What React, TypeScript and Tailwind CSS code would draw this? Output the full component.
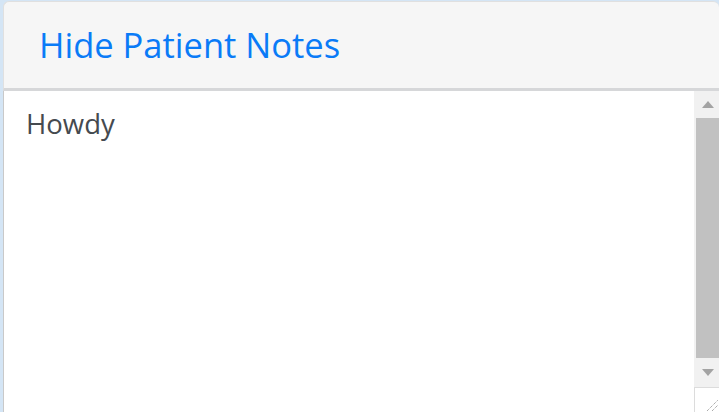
export default function App() {
  return (
    <div
      className="h-[412px] w-full overflow-hidden bg-[#d4e5f5] pl-[3px] pt-[1px] flex flex-col"
      style={{ fontFamily: '"Open Sans", "Noto Sans", sans-serif' }}
    >
      {/* Header */}
      <div className="h-[90px] shrink-0 rounded-t-[6px] border-t border-l border-[#e0e0e0] border-b-[3px] border-b-[#d6d7d9] bg-[#f6f6f6] pl-[35px] flex items-center">
        <button className="text-[34.5px] leading-none text-[#0a7bf7] pt-[1px]">Hide Patient Notes</button>
      </div>

      {/* Notes field */}
      <div className="flex-1 flex bg-white border-l border-[#c9c9c9]">
        <textarea
          readOnly
          defaultValue="Howdy"
          className="flex-1 resize-none outline-none bg-white pl-[22px] pt-[13px] text-[27.5px] leading-[40px] text-[#454a4f]"
        />
        {/* Scrollbar */}
        <div className="w-[25px] flex flex-col">
          <div className="flex-1 flex flex-col bg-[#f1f1f1]">
            <div className="h-[27px] flex items-center justify-center pl-[3px]">
              <svg width="12" height="7" viewBox="0 0 12 7">
                <path d="M6 0 L12 7 L0 7 Z" fill="#a3a3a3" />
              </svg>
            </div>
            <div className="flex-1 ml-[2px] bg-[#c1c1c1]" />
            <div className="h-[29px] flex items-center justify-center pl-[3px]">
              <svg width="12" height="7" viewBox="0 0 12 7">
                <path d="M0 0 L12 0 L6 7 Z" fill="#a3a3a3" />
              </svg>
            </div>
          </div>
          <div className="h-[25px] bg-white border-t border-l border-[#dcdcdc] relative">
            <svg className="absolute right-0 bottom-0" width="14" height="14" viewBox="0 0 14 14">
              <path d="M2 13 L13 2 M7 13 L13 7" stroke="#8a8a8a" strokeWidth="1" strokeDasharray="1 1" />
            </svg>
          </div>
        </div>
      </div>
    </div>
  )
}
